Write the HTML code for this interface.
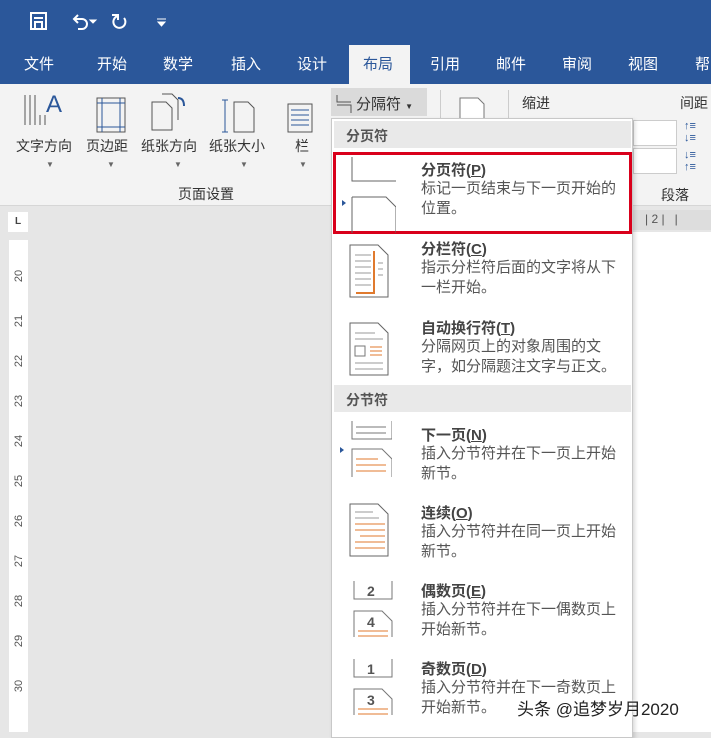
<!DOCTYPE html>
<html><head><meta charset="utf-8"><style>
*{margin:0;padding:0;box-sizing:border-box}
body{width:711px;height:732px;overflow:hidden;position:relative;background:#e6e6e6;font-family:"Liberation Sans","Noto Sans CJK SC",sans-serif;color:#444}
.abs{position:absolute}
#top{left:0;top:0;width:711px;height:84px;background:#2b579a}
.tab{position:absolute;top:53px;color:#fff;font-size:15px}
#rib{left:0;top:84px;width:711px;height:122px;background:#f3f3f3;border-bottom:1px solid #d6d6d6}
.lbl{position:absolute;font-size:14px;color:#333}
.arr{position:absolute;font-size:8px;color:#666}
#menu{left:331px;top:118px;width:302px;height:620px;background:#fff;border:1px solid #c8c8c8;box-shadow:2px 2px 4px rgba(0,0,0,.15)}
.hdr{position:absolute;left:2px;width:297px;height:27px;background:#e9e9e9;font-size:14px;font-weight:bold;color:#555;padding:5px 12px}
.t{position:absolute;left:89px;font-size:15px;font-weight:bold;color:#444}
.d{position:absolute;left:89px;font-size:15px;color:#555;line-height:20px;width:205px}
.ic{position:absolute;left:16px}
</style></head><body>
<div id="top" class="abs">
<svg class="abs" style="left:28px;top:10px" width="160" height="24"><g fill="none" stroke="#fff" stroke-width="2"><rect x="3" y="3" width="15" height="16"/><rect x="7" y="12" width="7" height="7"/><line x1="6" y1="8" x2="15" y2="8"/><path d="M46 9 h8 a5 5 0 0 1 0 10 h-4"/><path d="M50 5 l-4 4 4 4"/><path d="M90 6 a6 6 0 1 0 6 2"/><path d="M84 5 h6 v5"/></g><path d="M62 10 l3 3 3-3z M129 9h9 M130 12 l3.5 4 3.5-4z" fill="#fff" stroke="#fff"/></svg>
<span class="tab" style="left:24px">文件</span><span class="tab" style="left:97px">开始</span><span class="tab" style="left:163px">数学</span><span class="tab" style="left:231px">插入</span><span class="tab" style="left:297px">设计</span>
<div class="abs" style="left:349px;top:45px;width:61px;height:40px;background:#f3f3f3"></div>
<span class="tab" style="left:363px;color:#2b579a">布局</span>
<span class="tab" style="left:430px">引用</span><span class="tab" style="left:496px">邮件</span><span class="tab" style="left:562px">审阅</span><span class="tab" style="left:628px">视图</span><span class="tab" style="left:695px">帮</span>
</div>
<div id="rib" class="abs">
<svg class="abs" style="left:20px;top:6px" width="300" height="50"><g fill="none" stroke="#555" stroke-width="1"><path d="M5 5v30M10 5v30M15 5v30M20 25v10M25 25v10"/><rect x="77" y="8" width="28" height="34"/><path d="M82 8v34M100 8v34M77 13h28M77 37h28" stroke="#2b579a"/><path d="M132 12h14l6 6v22h-20z M142 4h10l6 6v20"/><path d="M205 10v32M202 10h6M202 42h6" stroke="#2b579a"/><path d="M214 12h14l6 6v24h-20z"/><rect x="268" y="14" width="24" height="28"/><path d="M271 20h18M271 25h18M271 30h18M271 35h18" stroke="#2b579a"/></g><text x="26" y="22" font-size="24" fill="#2b579a" font-family="Liberation Sans">A</text><path d="M158 8 q6 0 6 8" stroke="#2b579a" fill="none" stroke-width="2"/></svg>
<span class="lbl" style="left:16px;top:52px">文字方向</span><span class="lbl" style="left:86px;top:52px">页边距</span><span class="lbl" style="left:141px;top:52px">纸张方向</span><span class="lbl" style="left:209px;top:52px">纸张大小</span><span class="lbl" style="left:295px;top:52px">栏</span>
<span class="arr" style="left:46px;top:76px">▼</span><span class="arr" style="left:107px;top:76px">▼</span><span class="arr" style="left:174px;top:76px">▼</span><span class="arr" style="left:240px;top:76px">▼</span><span class="arr" style="left:299px;top:76px">▼</span>
<span class="lbl" style="left:178px;top:100px">页面设置</span>
<div class="abs" style="left:331px;top:4px;width:96px;height:28px;background:#dadada"></div>
<svg class="abs" style="left:335px;top:10px" width="20" height="20"><path d="M2 1v7h14M2 11h14v8" fill="none" stroke="#555"/></svg>
<span class="lbl" style="left:356px;top:9px;color:#333;font-size:15px">分隔符 <span style="font-size:8px">▼</span></span>
<div class="abs" style="left:440px;top:6px;width:1px;height:30px;background:#ccc"></div>
<svg class="abs" style="left:458px;top:12px" width="30" height="24"><path d="M2 2h18l6 6v16H2z" fill="#fff" stroke="#777"/></svg>
<div class="abs" style="left:508px;top:6px;width:1px;height:30px;background:#ccc"></div>
<span class="lbl" style="left:522px;top:9px">缩进</span><span class="lbl" style="left:680px;top:9px">间距</span>
<div class="abs" style="left:633px;top:36px;width:44px;height:26px;background:#fff;border:1px solid #ccc"></div>
<div class="abs" style="left:633px;top:64px;width:44px;height:26px;background:#fff;border:1px solid #ccc"></div>
<span class="abs" style="left:684px;top:36px;font-size:11px;color:#2b579a;line-height:12px">↑≡<br>↓≡</span>
<span class="abs" style="left:684px;top:65px;font-size:11px;color:#2b579a;line-height:12px">↓≡<br>↑≡</span>
<span class="lbl" style="left:661px;top:101px">段落</span>
</div>
<div class="abs" style="left:0;top:207px;width:711px;height:28px;background:#e6e6e6"></div>
<div class="abs" style="left:633px;top:210px;width:78px;height:20px;background:#ddd;font-size:12px;color:#555;padding:2px 12px">| 2 |&nbsp;&nbsp;&nbsp;|</div>
<div class="abs" style="left:633px;top:232px;width:78px;height:500px;background:#fff"></div>
<div class="abs" style="left:8px;top:212px;width:20px;height:20px;background:#fff;font-size:10px;font-weight:bold;text-align:center;line-height:20px">L</div>
<div class="abs" style="left:9px;top:240px;width:19px;height:492px;background:#fff"></div>
<div class="abs" style="left:9px;top:240px;width:19px;font-size:11px;color:#555">
<div style="position:absolute;top:30px;left:4px;transform:rotate(-90deg)">20</div><div style="position:absolute;top:75px;left:4px;transform:rotate(-90deg)">21</div><div style="position:absolute;top:115px;left:4px;transform:rotate(-90deg)">22</div><div style="position:absolute;top:155px;left:4px;transform:rotate(-90deg)">23</div><div style="position:absolute;top:195px;left:4px;transform:rotate(-90deg)">24</div><div style="position:absolute;top:235px;left:4px;transform:rotate(-90deg)">25</div><div style="position:absolute;top:275px;left:4px;transform:rotate(-90deg)">26</div><div style="position:absolute;top:315px;left:4px;transform:rotate(-90deg)">27</div><div style="position:absolute;top:355px;left:4px;transform:rotate(-90deg)">28</div><div style="position:absolute;top:395px;left:4px;transform:rotate(-90deg)">29</div><div style="position:absolute;top:440px;left:4px;transform:rotate(-90deg)">30</div>
</div>
<div id="menu" class="abs">
<div class="hdr" style="top:2px">分页符</div>
<div class="abs" style="left:1px;top:33px;width:299px;height:82px;border:3px solid #d9001b"></div>
<svg class="ic" style="top:36px;left:8px" width="56" height="80"><path d="M2 45l4 3-4 3z" fill="#2b579a"/><path d="M12 2v24h44M12 42h34l10 10v26M12 42v36" fill="none" stroke="#666"/></svg>
<div class="t" style="top:40px">分页符(<u>P</u>)</div>
<div class="d" style="top:60px">标记一页结束与下一页开始的位置。</div>
<svg class="ic" style="top:124px" width="44" height="56"><path d="M2 2h28l10 10v42H2z" fill="#fff" stroke="#666"/><path d="M7 12h16M7 18h16M7 24h16M7 30h16M7 36h16M7 42h16M30 20h5M30 26h5M30 32h5" stroke="#999"/><path d="M26 8v42h-18" stroke="#e07a2e" stroke-width="2" fill="none"/></svg>
<div class="t" style="top:119px">分栏符(<u>C</u>)</div>
<div class="d" style="top:139px">指示分栏符后面的文字将从下一栏开始。</div>
<svg class="ic" style="top:202px" width="44" height="56"><path d="M2 2h28l10 10v42H2z" fill="#fff" stroke="#666"/><path d="M7 12h20M7 18h28M7 42h28M7 48h28" stroke="#999"/><rect x="7" y="25" width="10" height="10" fill="none" stroke="#777"/><path d="M22 26h12M22 30h12M22 34h12" stroke="#e07a2e"/></svg>
<div class="t" style="top:198px">自动换行符(<u>T</u>)</div>
<div class="d" style="top:218px">分隔网页上的对象周围的文字，如分隔题注文字与正文。</div>
<div class="hdr" style="top:266px;background:#e9e9e9">分节符</div>
<svg class="ic" style="top:302px;left:6px" width="54" height="58"><path d="M2 26l4 3-4 3z" fill="#2b579a"/><path d="M14 0v18h40V0M18 6h30M18 12h30" fill="none" stroke="#777"/><path d="M14 56V28h30l10 10v18" fill="none" stroke="#777"/><path d="M18 38h22M18 44h30M18 50h30" stroke="#e07a2e"/></svg>
<div class="t" style="top:305px">下一页(<u>N</u>)</div>
<div class="d" style="top:325px">插入分节符并在下一页上开始新节。</div>
<svg class="ic" style="top:383px" width="44" height="56"><path d="M2 2h28l10 10v42H2z" fill="#fff" stroke="#666"/><path d="M7 10h18M7 16h24" stroke="#999"/><path d="M7 22h30M7 28h30M12 34h25M7 40h30M7 46h30" stroke="#e07a2e"/></svg>
<div class="t" style="top:383px">连续(<u>O</u>)</div>
<div class="d" style="top:403px">插入分节符并在同一页上开始新节。</div>
<svg class="ic" style="top:460px;left:20px" width="44" height="62"><path d="M2 2v18h38V2" fill="none" stroke="#777"/><text x="15" y="17" font-size="14" font-weight="bold" fill="#555">2</text><path d="M2 58V32h28l10 10v16" fill="none" stroke="#777"/><text x="15" y="48" font-size="14" font-weight="bold" fill="#555">4</text><path d="M6 52h30M6 57h30" stroke="#e07a2e"/></svg>
<div class="t" style="top:461px">偶数页(<u>E</u>)</div>
<div class="d" style="top:481px">插入分节符并在下一偶数页上开始新节。</div>
<svg class="ic" style="top:538px;left:20px" width="44" height="62"><path d="M2 2v18h38V2" fill="none" stroke="#777"/><text x="15" y="17" font-size="14" font-weight="bold" fill="#555">1</text><path d="M2 58V32h28l10 10v16" fill="none" stroke="#777"/><text x="15" y="48" font-size="14" font-weight="bold" fill="#555">3</text><path d="M6 52h30M6 57h30" stroke="#e07a2e"/></svg>
<div class="t" style="top:539px">奇数页(<u>D</u>)</div>
<div class="d" style="top:559px">插入分节符并在下一奇数页上开始新节。</div>
</div>
<div class="abs" style="left:517px;top:695px;font-size:17px;color:#222;text-shadow:0 0 2px #fff,0 0 2px #fff">头条 @追梦岁月2020</div>
</body></html>
